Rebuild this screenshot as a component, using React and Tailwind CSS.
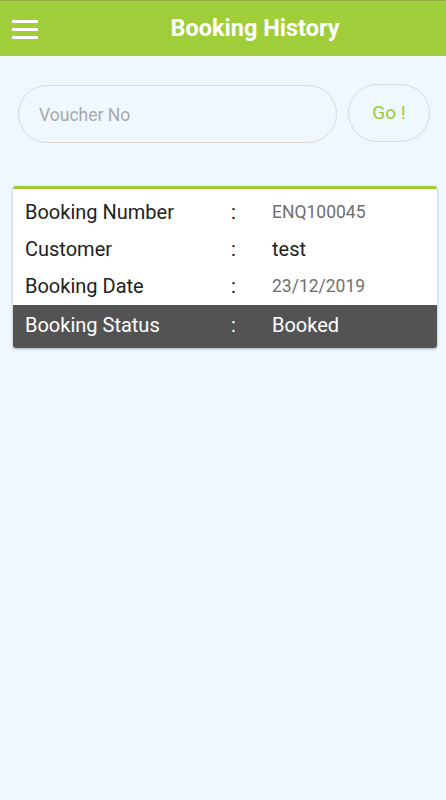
export default function App() {
  const rows = [
    { label: "Booking Number", value: "ENQ100045", cls: "text-[17.5px] text-[#6f6f6f]", h: "h-[36px]" },
    { label: "Customer", value: "test", cls: "text-[20px] text-[#222]", h: "h-[37px]" },
    { label: "Booking Date", value: "23/12/2019", cls: "text-[17.5px] text-[#6f6f6f]", h: "h-[38px]" },
  ];
  return (
    <div className="min-h-[800px] bg-[#eef8fe] font-['Roboto',sans-serif]">
      <div className="h-[56px] bg-[#a0cd3a] border-t border-[#8fb033] flex items-center relative">
        <div className="absolute left-[12px] top-[19px] flex flex-col gap-[5px]">
          <div className="w-[26px] h-[3px] bg-white" />
          <div className="w-[26px] h-[3px] bg-white" />
          <div className="w-[26px] h-[3px] bg-white" />
        </div>
        <div className="w-full pl-[64px] pt-[1px] text-center text-white font-bold text-[23.5px]">Booking History</div>
      </div>
      <div className="flex gap-[11px] pl-[18px] pr-[16px] pt-[29px]">
        <div className="flex-1 h-[58px] rounded-[29px] border border-[#dadada] flex items-center pl-[20px] pt-[2px] text-[17.5px] text-[#a9a9a9]">
          Voucher No
        </div>
        <div className="w-[82px] h-[58px] rounded-[29px] border border-[#dadada] flex items-center justify-center pt-[1px] text-[19px] text-[#9ccc32] -mt-[1px]">
          Go !
        </div>
      </div>
      <div className="ml-[13px] mr-[9px] mt-[43px] bg-white border-t-[3px] border-[#9ccc32] rounded-[3px] shadow-[0_1px_3px_rgba(0,0,0,0.3)] overflow-hidden">
        <div className="pt-[5px]">
          {rows.map((r) => (
            <div key={r.label} className={`flex items-center ${r.h}`}>
              <div className="w-[206px] pl-[12px] text-[20px] text-[#222]">{r.label}</div>
              <div className="w-[53px] text-[20px] text-[#222] pl-[12px]">:</div>
              <div className={r.cls}>{r.value}</div>
            </div>
          ))}
        </div>
        <div className="flex items-center h-[43px] pb-[4px] bg-[#535353] text-white text-[20px]">
          <div className="w-[206px] pl-[12px]">Booking Status</div>
          <div className="w-[53px] pl-[12px]">:</div>
          <div>Booked</div>
        </div>
      </div>
    </div>
  );
}
